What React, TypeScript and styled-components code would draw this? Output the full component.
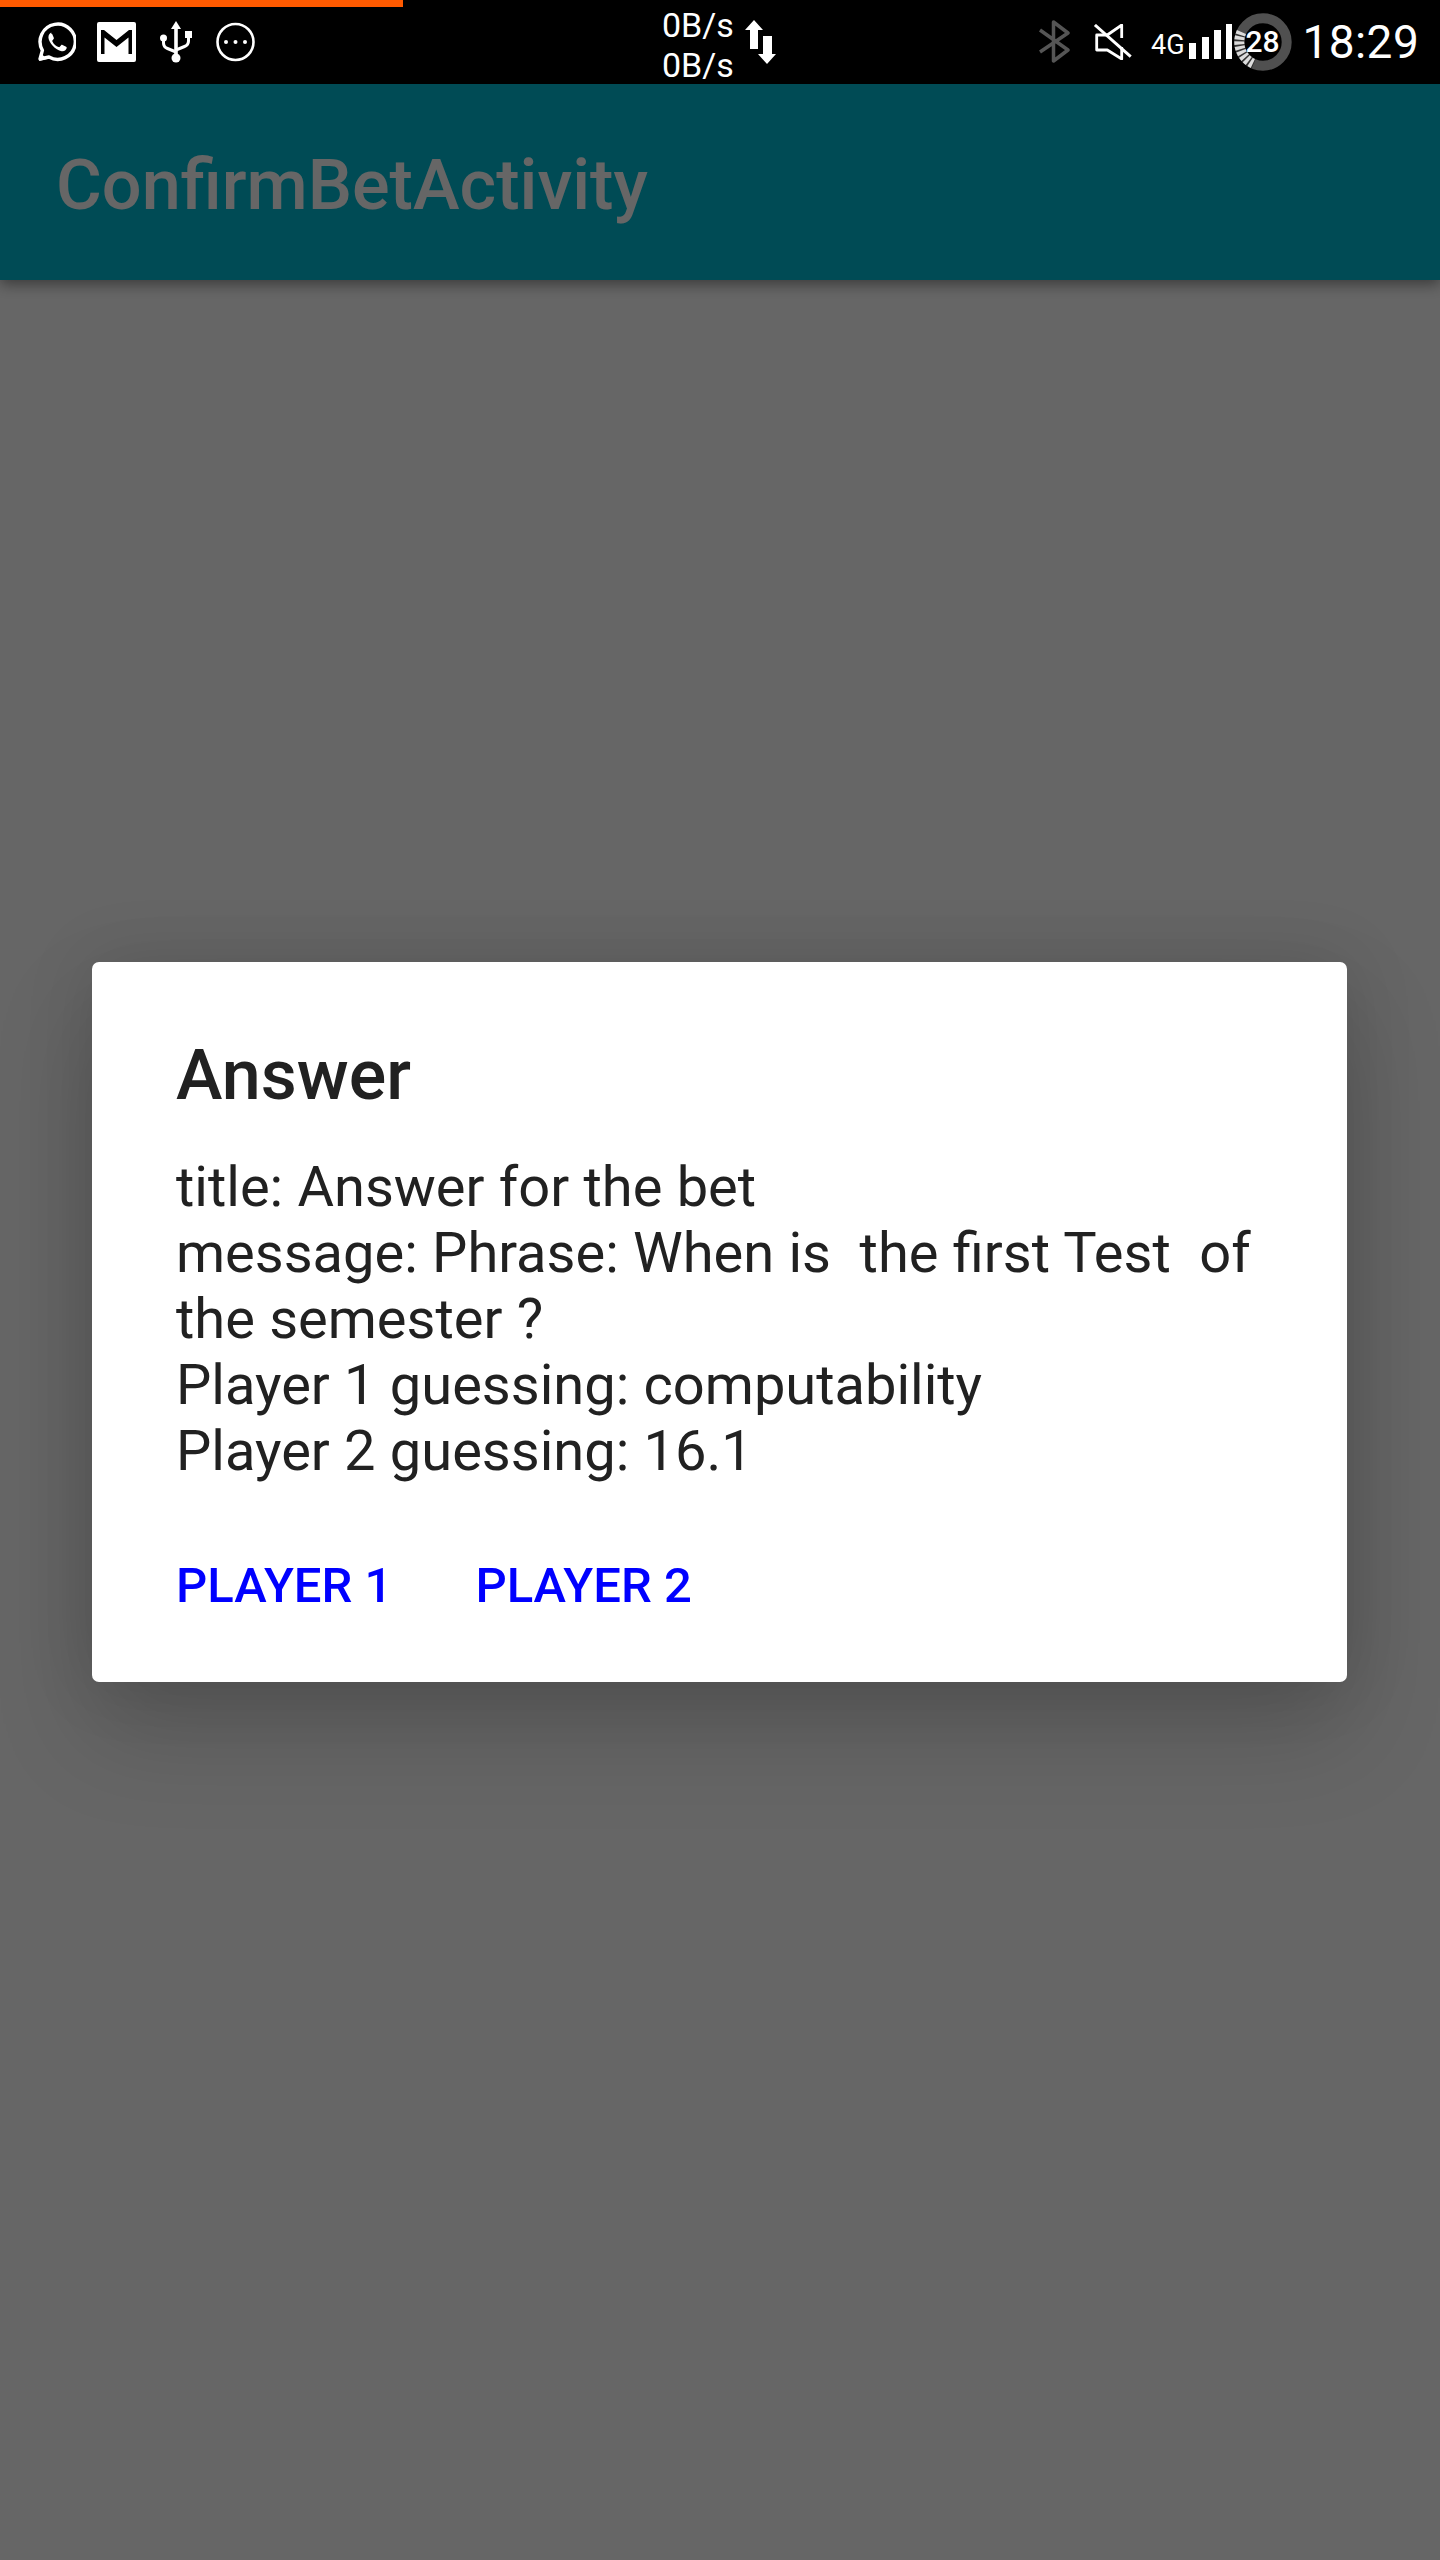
import React from "react";
import styled, { createGlobalStyle } from "styled-components";

const Global = createGlobalStyle`
  html, body { margin: 0; padding: 0; background: #fff; }
  * { box-sizing: border-box; }
`;

const Screen = styled.div`
  position: relative;
  width: 1440px;
  height: 2560px;
  overflow: hidden;
  background: #fff;
  font-family: Roboto, "Liberation Sans", sans-serif;
`;

const StatusBar = styled.header`
  position: relative;
  height: 84px;
  background: #000;
  color: #fff;
  display: flex;
  align-items: center;
`;

const Progress = styled.div`
  position: absolute;
  left: 0;
  top: 0;
  width: 403px;
  height: 7px;
  background: #ff5a00;
`;

const LeftIcons = styled.div`
  display: flex;
  align-items: center;
  gap: 21px;
  margin-left: 37px;
  width: 625px;
`;

const Speed = styled.div`
  display: flex;
  align-items: center;
  gap: 11px;
  width: 376px;
`;

const SpeedText = styled.div`
  font-size: 34px;
  line-height: 40px;
  width: 72px;
  margin-top: 6px;
  color: #fff;
  white-space: nowrap;
`;

const RightIcons = styled.div`
  display: flex;
  align-items: center;
`;

const Net = styled.span`
  font-size: 27px;
  line-height: 30px;
  color: #fff;
  margin: 6px 4px 0 18px;
`;

const Time = styled.time`
  font-size: 46px;
  line-height: 54px;
  margin-left: 10px;
  color: #fff;
  font-weight: 400;
  letter-spacing: 0.4px;
`;

const AppBar = styled.div`
  height: 196px;
  background: #00bcd4;
  color: #fff;
  display: flex;
  align-items: center;
  padding: 5px 0 0 56px;
  box-shadow: 0 4px 14px rgba(0, 0, 0, 0.45);
  font-size: 70.2px;
  font-weight: 500;
`;

const Scrim = styled.div`
  position: absolute;
  left: 0;
  right: 0;
  top: 84px;
  bottom: 0;
  background: rgba(0, 0, 0, 0.6);
  display: flex;
  align-items: center;
  justify-content: center;
`;

const Dialog = styled.div`
  width: 1255px;
  height: 720px;
  margin-right: 1px;
  background: #fff;
  border-radius: 7px;
  padding: 72px 84px 0;
  box-shadow: 0 50px 100px rgba(0, 0, 0, 0.17), 0 0 70px rgba(0, 0, 0, 0.12);
`;

const Title = styled.h2`
  margin: 0;
  font-size: 70px;
  line-height: 82px;
  font-weight: 500;
  color: #212121;
`;

const Message = styled.p`
  margin: 38px 0 0;
  font-size: 56px;
  line-height: 66px;
  font-weight: 400;
  word-spacing: 0.4px;
  color: #212121;
  white-space: pre-wrap;
`;

const Actions = styled.div`
  display: flex;
  gap: 83px;
  margin-top: 72px;
`;

const Action = styled.button`
  border: 0;
  padding: 0;
  background: none;
  font-family: inherit;
  font-size: 49px;
  line-height: 60px;
  font-weight: 500;
  color: #0000ff;
  text-transform: uppercase;
`;

const Whatsapp = () => (
  <svg width="39" height="40" viewBox="0 0 39 40" fill="none">
    <path d="M3 37l2.4-8.6A17.6 17.6 0 1 1 12 35z" stroke="#fff" strokeWidth="3.4" strokeLinejoin="round" />
    <path d="M2 39l1.500-8 6.500 6z" fill="#fff" />
    <path d="M14.400 10.600c-1 .2-3.200 2-3 5 .3 5 6.800 12.600 13.300 13.600 2.700.4 4.800-1.600 5-3.200.1-.6-.1-1-.6-1.300l-3.600-1.800c-.6-.3-1-.2-1.400.3l-1.300 1.600c-.3.4-.7.5-1.200.3-2.600-1-4.800-3-6.200-5.700-.2-.4-.2-.8.2-1.200l1-1.200c.3-.4.4-.8.2-1.300l-1.500-3.500c-.3-.6-.6-.7-1.400-.6z" fill="#fff" />
  </svg>
);

const Gmail = () => (
  <svg width="39" height="40" viewBox="0 0 39 40">
    <path fillRule="evenodd" fill="#fff" d="M2 0h35a2 2 0 0 1 2 2v36a2 2 0 0 1-2 2H2a2 2 0 0 1-2-2V2a2 2 0 0 1 2-2zM4 8v24h3.500V15.500L19.500 25l12-9.500V32H35V8h-3L19.500 18 7 8z" />
  </svg>
);

const Usb = () => (
  <svg width="38" height="42" viewBox="-3 0 38 42">
    <path d="M16 0l5 8h-3.200v26h-3.600V8H11z" fill="#fff" />
    <circle cx="16" cy="37" r="4.500" fill="#fff" />
    <circle cx="3.500" cy="17" r="3.500" fill="#fff" />
    <rect x="25" y="10" width="7" height="7" fill="#fff" />
    <path d="M3.500 18v4c0 3 1.500 4.500 4 5.500L16 31M28.500 16v4c0 3-1.500 4.500-4 5.500L16 29" stroke="#fff" strokeWidth="3" fill="none" />
  </svg>
);

const More = () => (
  <svg width="39" height="40" viewBox="0 0 39 40">
    <circle cx="19.500" cy="20" r="18" stroke="#fff" strokeWidth="2.600" fill="none" />
    <circle cx="10" cy="20" r="2" fill="#fff" />
    <circle cx="19.500" cy="20" r="2" fill="#fff" />
    <circle cx="29" cy="20" r="2" fill="#fff" />
  </svg>
);

const Arrows = () => (
  <svg width="32" height="45" viewBox="0 0 32 45">
    <path d="M9 0l9 10h-5v19H5V10H0z" fill="#fff" />
    <path d="M18 16h9v18h4l-9 10-9-10h5z" fill="#fff" />
  </svg>
);

const Bluetooth = () => (
  <svg width="32" height="44" viewBox="0 0 32 44" fill="none">
    <path d="M2 10l28 20-14.500 11V2L30 13 2 32" stroke="#555" strokeWidth="3.500" strokeLinejoin="round" />
  </svg>
);

const Mute = () => (
  <svg width="40" height="36" viewBox="0 0 40 36" fill="none" style={{ marginLeft: 23 }}>
    <path d="M28.700 14V1L14.300 11H3.700v15h10.600l14.400 9v-12" stroke="#fff" strokeWidth="2.800" strokeLinejoin="round" />
    <path d="M1.900 1l35.800 31.700" stroke="#fff" strokeWidth="3" />
  </svg>
);

const Signal = () => (
  <svg width="43" height="35" viewBox="0 0 43 35" style={{ marginTop: -1 }}>
    <rect x="0" y="19" width="7" height="16" fill="#fff" />
    <rect x="13" y="13" width="7" height="22" fill="#fff" />
    <rect x="25" y="6" width="7" height="29" fill="#fff" />
    <rect x="37" y="0" width="6" height="35" fill="#fff" />
  </svg>
);

const RingBox = styled.div`
  position: relative;
  width: 60px;
  height: 60px;
  margin-left: 1px;
  margin-top: -1px;
`;

const RingLabel = styled.span`
  position: absolute;
  inset: 0;
  display: flex;
  align-items: center;
  justify-content: center;
  font-size: 30px;
  font-weight: 500;
  color: #fff;
`;

const Ring = () => (
  <RingBox>
    <svg width="60" height="60" viewBox="0 0 60 60" fill="none">
      <circle cx="30" cy="30" r="23.700" stroke="#505050" strokeWidth="10" />
      <path d="M8.500 20A23.700 23.700 0 0 0 20.700 51.800" stroke="#333" strokeWidth="10" />
      <path d="M8.500 20A23.700 23.700 0 0 0 20.700 51.800" stroke="#dcdcdc" strokeWidth="10" strokeDasharray="3.200 1.600" />
    </svg>
    <RingLabel>28</RingLabel>
  </RingBox>
);

export default function App() {
  return (
    <Screen>
      <Global />
      <StatusBar>
        <Progress />
        <LeftIcons>
          <Whatsapp />
          <Gmail />
          <Usb />
          <More />
        </LeftIcons>
        <Speed>
          <SpeedText>0B/s<br />0B/s</SpeedText>
          <Arrows />
        </Speed>
        <RightIcons>
          <Bluetooth />
          <Mute />
          <Net>4G</Net>
          <Signal />
          <Ring />
          <Time>18:29</Time>
        </RightIcons>
      </StatusBar>
      <AppBar>ConfirmBetActivity</AppBar>
      <Scrim>
        <Dialog>
          <Title>Answer</Title>
          <Message>{"title: Answer for the bet\nmessage: Phrase: When is  the first Test  of the semester ?\nPlayer 1 guessing: computability\nPlayer 2 guessing: 16.1"}</Message>
          <Actions>
            <Action>Player 1</Action>
            <Action>Player 2</Action>
          </Actions>
        </Dialog>
      </Scrim>
    </Screen>
  );
}
